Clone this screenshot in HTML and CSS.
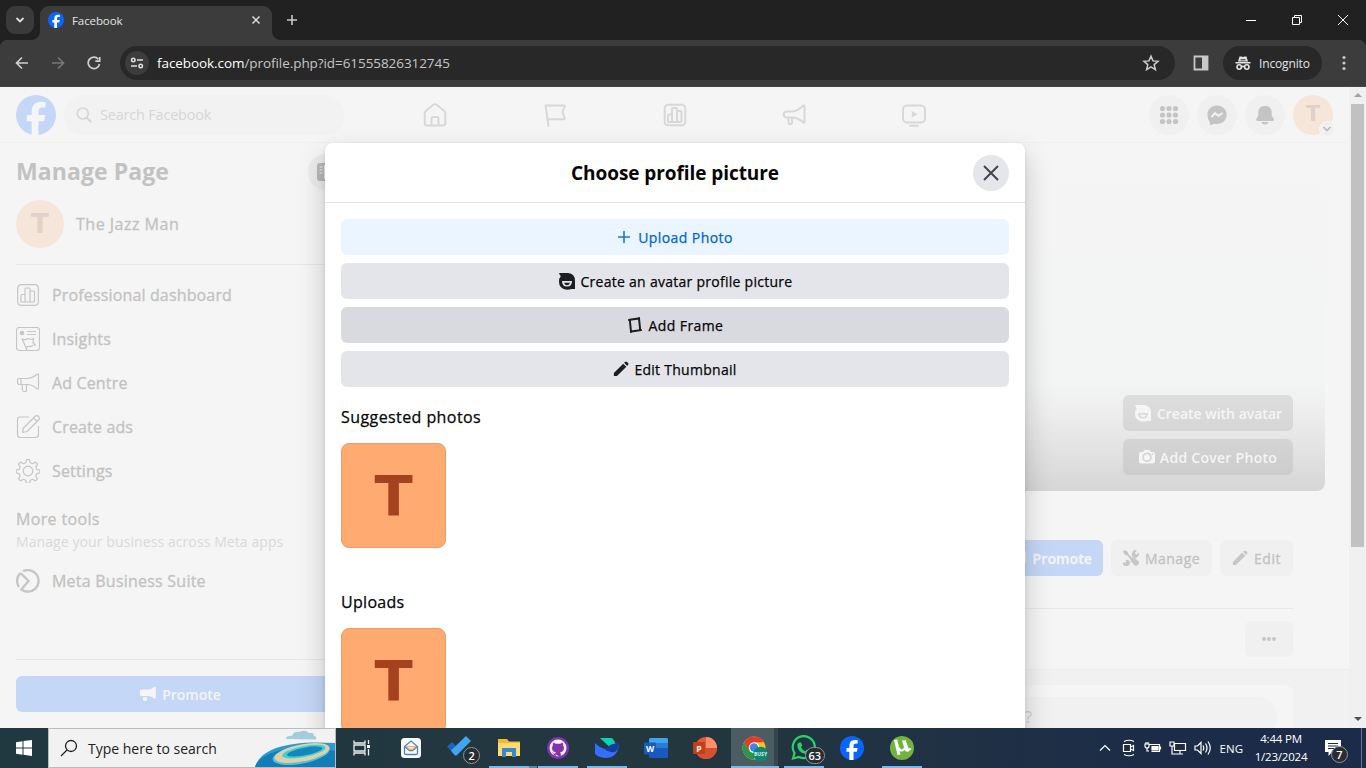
FILE: index.html
```html
<!DOCTYPE html>
<html lang="en">
<head>
<meta charset="utf-8">
<title>Facebook</title>
<link rel="stylesheet" href="styles.css">
</head>
<body>
<svg class="defs" width="0" height="0">
  <symbol id="fb" viewBox="0 0 40 40"><circle cx="20" cy="20" r="20" fill="currentColor"/><path class="fb-f" d="M15.600 40V26.200H10.800V20h4.800v-2.700C15.600 10 18.900 6.700 25.200 6.700c1.400 0 3.300.2 4.300.5v5.400c-.6-.1-1.500-.1-2.500-.1-3.500 0-4.500 1.300-4.500 4.700V20h6.800l-1.200 6.200h-5.600V40z"/></symbol>
  <symbol id="chart" viewBox="0 0 24 24"><rect x="1.700" y="1.700" width="20.600" height="20.600" rx="3.500"/><path d="M5 19v-6.500q0-1 1-1h3V19zM9 19V6q0-1 1-1h3q1 0 1 1v13M14 8h3.500q1 0 1 1v9q0 1-1 1H6"/></symbol>
  <symbol id="horn" viewBox="0 0 24 24"><path d="M5 8.500h5.500C15 8.500 19 5 21 2.700q1.500-.8 1.500 1v15q0 1.500-1.500.6C18.500 17 15 14.500 10.500 14.500H5q-3.300 0-3.300-3t3.300-3zM6.500 14.500v4.700q0 2 1.700 2t1.800-2v-4.700"/></symbol>
  <symbol id="hornfill" viewBox="0 0 18 16"><path d="M1 5q0-1.500 1.500-1.500H9Q12 3.500 15 1q1.800-.9 1.800.8v10q0 1.500-1.800.6Q12 10 9 10H2.500Q1 10 1 8.500zM4 11.200h4V14q0 1-1 1H5.500Q4 15 4 13.500z"/></symbol>
  <symbol id="pencil" viewBox="0 0 18 18"><path d="M1 17v-3.500L11.500 3 15 6.500 4.500 17zM12.500 2 14 .8q.8-.7 1.700.2l1.300 1.300q.8.900.2 1.700L16 5.500z"/></symbol>
  <symbol id="avatar" viewBox="0 0 18 18"><path fill-rule="evenodd" d="M1 1h9q7 .5 7 8v8h-3.500q-2 .7-4.500.7-8-.7-8-8Q1 6 2.800 4.200 1.500 3 1 1zM4 9q0 5.500 5 5.500T14 9z"/><path d="M6 10.800h6q-1 2.500-3 2.500t-3-2.500z"/></symbol>
</svg>

<div class="tabs">
  <div class="tab-search"><svg width="12" height="12" viewBox="0 0 12 12"><path d="M2.500 4 6 7.500 9.500 4" fill="none" stroke="#ddd" stroke-width="1.800"/></svg></div>
  <div class="tab">
    <svg class="favicon" width="16" height="16"><use href="#fb"/></svg><span>Facebook</span>
    <svg width="10" height="10" viewBox="0 0 10 10"><path d="M1.500 1.500l7 7M8.500 1.500l-7 7" stroke="#ddd" stroke-width="1.500"/></svg>
  </div>
  <svg class="newtab" width="12" height="12" viewBox="0 0 12 12"><path d="M6 1v10M1 6h10" stroke="#c8c8c8" stroke-width="1.600"/></svg>
  <div class="window-btns">
    <svg width="12" height="12" viewBox="0 0 12 12"><path d="M1 6.500h10"/></svg>
    <svg width="12" height="12" viewBox="0 0 12 12"><path d="M1.500 3.500h7v7h-7zM3.500 3.500v-2h7v7h-2"/></svg>
    <svg width="12" height="12" viewBox="0 0 12 12"><path d="M1 1l10 10M11 1L1 11"/></svg>
  </div>
</div>

<div class="toolbar">
  <div class="nav-btns">
    <svg width="14" height="14" viewBox="0 0 14 14"><path d="M13 7H2M7 1.500 1.500 7 7 12.500"/></svg>
    <svg class="dim" width="14" height="14" viewBox="0 0 14 14"><path d="M1 7h11M7 1.500 12.500 7 7 12.500"/></svg>
    <svg width="14" height="14" viewBox="0 0 14 14"><path d="M12.500 8A5.700 5.700 0 1 1 11.300 3.200M12.700 1v4.200H8.300"/></svg>
  </div>
  <div class="omnibox">
    <div class="site-info"><svg width="14" height="14" viewBox="0 0 14 14" fill="none" stroke="#ddd" stroke-width="1.600"><circle cx="3.300" cy="4" r="1.700"/><path d="M7 4h6M1 10h6"/><circle cx="10.700" cy="10" r="1.700"/></svg></div>
    <span class="url"><b>facebook.com</b>/profile.php?id=61555826312745</span>
    <svg width="18" height="18" viewBox="0 0 18 18"><path d="M9 2.200l2 4.700 5 .4-3.800 3.300 1.200 5L9 12.900l-4.400 2.700 1.200-5L2 7.300l5-.4z" fill="none" stroke="#ccc" stroke-width="1.500"/></svg>
  </div>
  <svg class="panel" width="16" height="16" viewBox="0 0 16 16"><path d="M1.500 1.500h13v13h-13z" fill="none" stroke="#c8c8c8" stroke-width="1.800"/><path d="M9 1h6v14H9z" fill="#c8c8c8"/></svg>
  <div class="incognito">
    <svg width="16" height="16" viewBox="0 0 16 16"><path d="M4.500 1.500h2l1.500.6 1.500-.6h2L13 6.500H3zM.5 7h15v1.600H.5z" fill="#e3e3e3"/><path d="M5.500 4.800h5" stroke="#282828"/><g fill="none" stroke="#e3e3e3" stroke-width="1.600"><circle cx="4.200" cy="12" r="2.200"/><circle cx="11.800" cy="12" r="2.200"/><path d="M6.400 11.800q1.600-.8 3.200 0"/></g></svg>
    <span>Incognito</span>
  </div>
  <svg class="menu" width="4" height="16" viewBox="0 0 4 16" fill="#c8c8c8"><circle cx="2" cy="2.500" r="1.600"/><circle cx="2" cy="8" r="1.600"/><circle cx="2" cy="13.500" r="1.600"/></svg>
</div>

<div class="page">
  <div class="content">
    <header class="fb-header">
      <svg class="logo" width="40" height="40"><use href="#fb"/></svg>
      <div class="search"><svg width="16" height="16" viewBox="0 0 16 16" fill="none" stroke="#d6d6d6" stroke-width="1.700"><circle cx="6.800" cy="6.500" r="5.500"/><path d="M10.700 10.500l4.500 4.700" stroke-width="2"/></svg><span>Search Facebook</span></div>
      <nav>
        <svg viewBox="0 0 24 24"><path d="M1.700 10.500q0-1.700 1.300-2.800l7-5.700q2-1.400 4 0l7 5.700q1.300 1.100 1.300 2.800V20q0 2.500-2.500 2.500H4.200Q1.700 22.500 1.700 20zM8.500 22.500v-7q0-1.500 1.500-1.500h4q1.500 0 1.500 1.500v7"/></svg>
        <svg viewBox="0 0 24 24"><path d="M5.500 23 2.500 2.500h18.700q.8.200.5 1L19.500 9l2.200 6q.2 1-.7 1.300H4.500"/></svg>
        <svg><use href="#chart"/></svg>
        <svg><use href="#horn"/></svg>
        <svg viewBox="0 0 24 24"><rect x="1" y="2.500" width="22" height="17" rx="4"/><path d="M8 22.800h8"/><path d="M9.800 8v6.500l5.700-3.250z" fill="#d8d8d8" stroke="none"/></svg>
      </nav>
      <div class="actions">
        <i><svg width="20" height="20" viewBox="0 0 20 20"><g id="r"><circle cx="3.500" cy="3.500" r="2.600"/><circle cx="10" cy="3.500" r="2.600"/><circle cx="16.500" cy="3.500" r="2.600"/></g><use href="#r" y="6.500"/><use href="#r" y="13"/></svg></i>
        <i><svg width="20" height="20" viewBox="0 0 20 20"><path d="M10 .5c5.500 0 9.600 4 9.600 9.300s-4.100 9.300-9.600 9.300q-1.500 0-2.800-.4L4 19.900q-1 .3-1.100-.8l-.2-2.300Q.4 14 .4 9.800C.4 4.500 4.500.5 10 .5z"/><path d="M4.500 12 8 8.200l3.500 2.700L15.500 8" fill="none" stroke="#f0f0f0" stroke-width="2"/></svg></i>
        <i><svg width="20" height="20" viewBox="0 0 20 20"><path d="M10 .8c4 0 6.700 2.800 6.700 6.500v3.500l2 3q.8 2-1.200 2.200h-15Q.5 15.800 1.300 13.800l2-3V7.300C3.300 3.600 6 .8 10 .8zM6.500 17h7Q13 19.500 10 19.500T6.500 17z"/></svg></i>
        <i class="me">T<em><svg width="10" height="8" viewBox="0 0 10 8"><path d="M1.500 2 5 5.500 8.500 2" fill="none" stroke="#bbb" stroke-width="1.700"/></svg></em></i>
      </div>
    </header>
    <div class="columns">
      <aside>
        <div class="side-title"><h1>Manage Page</h1><i><svg width="18" height="18" viewBox="0 0 18 18"><rect width="18" height="18" rx="3" fill="#b8b8b8"/><path d="M2.500 4h3M2.500 7h3M2.500 10h3M7.500 2v14" stroke="#eee" stroke-width="1.200"/></svg></i></div>
        <div class="profile"><i>T</i><span>The Jazz Man</span></div>
        <ul>
          <li><svg><use href="#chart"/></svg><span>Professional dashboard</span></li>
          <li><svg viewBox="0 0 24 24"><rect x=".5" y=".5" width="23" height="23" rx="3"/><circle cx="6" cy="6" r="1.700" fill="#c6c6c6"/><path d="M11 4.500h9M11 7.500h9M6 11.500l5 11.500M6.500 12q3 1.500 5.500-.5 3 1.500 5.500 0l-.5 4 2.500 2.500q-3 0-4.500 1.500-2.500-.5-5 1"/></svg><span>Insights</span></li>
          <li><svg viewBox="0 0 24 24"><path d="M3.500 7.500H11c4 0 7-1.500 10-4.200q1.500-.8 1.500.8v13q0 1.500-1.500.7-5-4.300-10-4.300H3.500q-2 0-2-2v-2q0-2 2-2zM5 7.500v6M6 13.500l.5 5.500q.2 1.500 1.500 1.500h1.500q1 0 1-1v-6"/></svg><span>Ad Centre</span></li>
          <li><svg viewBox="0 0 24 24"><path d="M13 2H4Q1.500 2 1.500 4.500v15Q1.500 22.500 4 22.500h15.500q3 0 3-3V11M6.500 17.500l1-4.500L19.500 1q1.500-1 3 .5T23 4.500l-12 12zM17.500 3l3.500 3.500"/></svg><span>Create ads</span></li>
          <li><svg viewBox="0 0 24 24"><circle cx="12" cy="12" r="4.800"/><path d="M10.500.7h3l.7 3 2.500 1 2.700-1.700 2.100 2.100-1.700 2.700 1 2.500 3 .7v3l-3 .7-1 2.500 1.700 2.700-2.100 2.100-2.700-1.700-2.500 1-.7 3h-3l-.7-3-2.500-1L4.600 22l-2.100-2.100 1.700-2.700-1-2.500-3-.7v-3l3-.7 1-2.500-1.700-2.700L4.600 3l2.700 1.700 2.500-1z"/></svg><span>Settings</span></li>
        </ul>
        <h2>More tools</h2>
        <p>Manage your business across Meta apps</p>
        <div class="suite"><svg width="24" height="24" viewBox="0 0 24 24" fill="none" stroke="#c6c6c6" stroke-width="2.400"><path d="M7 2.200A10.800 10.800 0 1 1 5.300 20.500L12.500 12 4.500 4M3 18A10.800 10.800 0 0 1 4.500 4"/></svg><span>Meta Business Suite</span></div>
        <div class="side-foot"><button><svg width="18" height="16"><use href="#hornfill"/></svg><span>Promote</span></button></div>
      </aside>
      <main>
        <section class="cover">
          <button class="c1"><svg width="18" height="18"><use href="#avatar"/></svg><span>Create with avatar</span></button>
          <button class="c2"><svg width="16" height="16" viewBox="0 0 16 16"><path fill-rule="evenodd" d="M2 3h2l1.500-2h5L12 3h2q2 0 2 2v7.500q0 2-2 2H2q-2 0-2-2V5q0-2 2-2zm6 .5a4.700 4.700 0 1 0 .01 0zM8 5a3.300 3.300 0 1 1-.01 0zm5.500-.7a.8.800 0 1 0 .01 0z"/></svg><span>Add Cover Photo</span></button>
        </section>
        <section class="page-actions">
          <button class="blue"><svg width="18" height="16"><use href="#hornfill"/></svg><span>Promote</span></button>
          <button class="manage"><svg width="16" height="16" viewBox="0 0 16 16"><path d="M0 1.500 1.500 0l3.500 2 .3 2L9 7.700l.5-.5q2 .3 3 1.300l3.300 3.300q.7 1.500-.8 3t-3 .8L8.700 12.300Q7.500 11 7.500 9.200L4 5.300l-2-.3zM1 15.500q-1.500-1-.8-3l2 .3 1-1-.5-2q3-.7 4 1.500t-1.200 4.200-4.500 0zM9 6q-.8-2.500.8-4.500T14 .3l-2 2.200.5 1.500 1.500.5 2-2.200q.5 2.500-1 4.200T11 7.500z"/></svg><span>Manage</span></button>
          <button><svg width="16" height="16"><use href="#pencil"/></svg><span>Edit</span></button>
        </section>
        <section class="more-row"><button><svg width="14" height="4" viewBox="0 0 14 4" fill="#c4c4c4"><circle cx="2" cy="2" r="1.900"/><circle cx="7" cy="2" r="1.900"/><circle cx="12" cy="2" r="1.900"/></svg></button></section>
        <section class="feed"><div class="card"><div class="composer">?</div></div></section>
      </main>
    </div>
  </div>
  <div class="scrollbar"><i class="up"></i><div></div><i class="down"></i></div>

  <div class="dialog">
    <div class="dlg-head"><h2>Choose profile picture</h2><button><svg width="18" height="18" viewBox="0 0 18 18"><path d="M2 2l14 14M16 2 2 16" stroke="#42464c" stroke-width="2"/></svg></button></div>
    <div class="dlg-body">
      <button class="upload"><svg width="14" height="14" viewBox="0 0 14 14"><path d="M7 1v12M1 7h12" stroke="#1a74dc" stroke-width="1.600"/></svg><span>Upload Photo</span></button>
      <button class="b-avatar"><svg width="18" height="18"><use href="#avatar"/></svg><span>Create an avatar profile picture</span></button>
      <button class="b-frame"><svg width="16" height="16" viewBox="0 0 16 16"><path d="M2.800 2.800 12 1.500l1.200 11.700L4 14.500z" fill="none" stroke="#1c1e21" stroke-width="2"/><path d="M1 3h3M12 .3v3M3.800 16v-3M15 13h-3" stroke="#1c1e21" stroke-width="1.300"/></svg><span>Add Frame</span></button>
      <button class="b-edit"><svg width="16" height="16"><use href="#pencil"/></svg><span>Edit Thumbnail</span></button>
      <h3>Suggested photos</h3>
      <div class="photo">T</div>
      <h3 class="uploads">Uploads</h3>
      <div class="photo">T</div>
    </div>
  </div>
</div>

<div class="taskbar">
  <div class="start"><svg width="16" height="16" viewBox="0 0 16 16"><path d="M0 2.200 6.500 1.200v6.300H0zM7.500 1.100 16 0v7.500H7.500zM0 8.500h6.500v6.300L0 13.800zM7.500 8.500H16V16l-8.500-1.200z" fill="#fff"/></svg></div>
  <div class="tb-search">
    <svg width="18" height="18" viewBox="0 0 18 18" fill="none" stroke="#222" stroke-width="1.300"><circle cx="11" cy="7" r="5.500"/><path d="M7 11l-6 6"/></svg><span>Type here to search</span>
    <svg class="island" width="80" height="38" viewBox="0 0 80 38"><path d="M0 38C5 20 32 11 80 14v24z" fill="#2a9ad0"/><path d="M0 38C5 23 40 13 80 22v16z" fill="#127db8"/><g transform="rotate(-11 47 24)"><ellipse cx="46" cy="25" rx="29" ry="9.500" fill="#4fc3d6"/><ellipse cx="47" cy="24" rx="28" ry="8.500" fill="#e3cfa6"/><ellipse cx="49" cy="23" rx="22" ry="5.500" fill="#40d0db"/><ellipse cx="50" cy="23" rx="18" ry="3.800" fill="#1488bd"/></g><path d="M31 10q1-4 6-3 2-5 7-4 6-3 10 1 5-1 5 3 3 0 2 3.500z" fill="#a5ccdb"/></svg>
  </div>
  <div class="apps">
    <div><svg width="18" height="16" viewBox="0 0 18 16" fill="none" stroke="#eee" stroke-width="1.300"><path d="M1 .5V3h11V.5M1 5h11v6H1zM1 15.500V13h11v2.500M15.500 0v4M15.500 9v6.500"/><path d="M14 5h3v3h-3z" fill="#fff" stroke="none"/></svg></div>
    <div><svg width="20" height="20" viewBox="0 0 20 20"><rect width="20" height="20" rx="3.500" fill="#f8f9fb"/><path d="M3.500 8.500 10 3l6.500 5.500V15q0 1.500-1.500 1.500H5Q3.500 16.500 3.500 15zl5 4h3l5-4" fill="none" stroke="#4f83bd" stroke-width="1.300"/><path d="M5.500 8.500h9l-2.500 2.500H8z" fill="none" stroke="#edb15f" stroke-width="1.200"/></svg></div>
    <div class="todo"><svg width="28" height="26" viewBox="0 0 28 26"><path d="M0 11.500 5 7l7 7-4.500 6z" fill="#1c63bb"/><path d="M7.500 20 4 15.500 19 1l5 5L10 20q-1.200 1-2.500 0z" fill="#42a5ef"/></svg><em class="badge b2">2</em></div>
    <div class="run files"><svg width="22" height="20" viewBox="0 0 22 20"><path d="M0 1h9l2 2.500h11V18H0z" fill="#f3b934"/><path d="M0 5h22v13H0z" fill="#ffdc73"/><path d="M4 19v-9h14v9h-4v-5H8v5z" fill="#3489d0"/></svg></div>
    <div class="run"><svg width="22" height="22" viewBox="0 0 22 22"><circle cx="11" cy="11" r="11" fill="#8333a9"/><circle cx="11" cy="11" r="8.500" fill="#f5f2f8"/><path d="M8.500 20v-3q-2.500.3-3.300-1.800M8.500 17q0-1.200.7-1.800-4-.5-4-4.200 0-1.500.9-2.500-.3-1.300.2-2.500 1.300 0 2.500 1h4.400q1.200-1 2.500-1 .5 1.200.2 2.500.9 1 .9 2.500 0 3.700-4 4.200.7.600.7 1.800v3z" fill="#8333a9" stroke="#8333a9" stroke-width=".5"/></svg></div>
    <div class="run"><svg width="24" height="20" viewBox="0 0 24 20"><path d="M5 0h12q3 3 3.500 6L14 8.500z" fill="#09d3b3"/><path d="M0 5q6 6 12 6 4-6 12-5-1 13-12 14Q4 20 0 16z" fill="#3370ff"/><path d="M10 12q6-8 14-6-1 10-8 8-3-1-6-2z" fill="#143c9d"/></svg></div>
    <div><svg width="24" height="20" viewBox="0 0 24 20"><rect x="5" width="19" height="20" rx="1.500" fill="#185abd"/><path d="M5 1.500Q5 0 6.500 0h16Q24 0 24 1.500V5H5z" fill="#41a5ee"/><path d="M5 5h19v5H5z" fill="#2b7cd3"/><rect y="4.500" width="12" height="12" rx="1" fill="#185abd"/><text x="6" y="14" class="office">W</text></svg></div>
    <div><svg width="24" height="22" viewBox="0 0 24 22"><circle cx="13" cy="11" r="11" fill="#e05a37"/><path d="M13 0a11 11 0 0 1 11 11H13z" fill="#ff8f6b"/><path d="M2 11h22a11 11 0 0 1-22 0z" fill="#d35230"/><rect y="5" width="12" height="12" rx="1" fill="#c43e1c"/><text x="6" y="14.500" class="office">P</text></svg></div>
    <div class="run active"><svg width="26" height="26" viewBox="0 0 26 26"><circle cx="12" cy="13" r="11.500" fill="#fbc116"/><path d="M2 7.300A11.500 11.500 0 0 1 22 7.300H12L7 16z" fill="#e33b2e"/><path d="M2 7.300 7.200 16 12 19v5.500A11.500 11.500 0 0 1 2 7.300z" fill="#229953"/><circle cx="12" cy="12.500" r="5.200" fill="#fff"/><circle cx="12" cy="12.500" r="4.200" fill="#4284ed"/><circle cx="18.500" cy="19" r="7.300" fill="#118773"/><text x="18.500" y="21" class="busy">BUSY</text></svg></div>
    <div class="run"><svg width="26" height="26" viewBox="0 0 26 26"><path d="M3 23.500 4.500 18A11 11 0 1 1 9 22z" fill="none" stroke="#25d366" stroke-width="2.200"/><path d="M9 7.500h2l1.200 3-1.200 1.700q1.500 3 4.300 4l1.500-1.800 3 1.500q0 3-3.500 3.300-9-1.500-9-9.500 0-1 1.700-2.200z" fill="#25d366"/></svg><em class="badge b63">63</em></div>
    <div class="tb-fb"><svg width="24" height="24"><use href="#fb"/></svg></div>
    <div class="run"><svg width="24" height="24" viewBox="0 0 24 24"><circle cx="12" cy="12" r="12" fill="#72b340"/><path d="M4 4l3.500 15 3-.5-1-3.500q3 1.500 5-1 1.500 2.500 4 1.500l3-2.500-1.500-1-1.500.5L15.500 4l-3.500.5 2 6.500q-.5 3-3 2.300L9 11 7.200 3.500z" fill="#fff"/></svg></div>
  </div>
  <div class="tray">
    <svg width="12" height="8" viewBox="0 0 12 8"><path d="M1 6.500 6 1.500l5 5"/></svg>
    <svg width="14" height="18" viewBox="0 0 14 18"><path d="M2 2.500q5-2.500 10 0M2 15.500q5 2.500 10 0M1.500 5.500h7v7h-7zM8.500 8l3-1.500v5L8.500 10"/></svg>
    <svg width="18" height="14" viewBox="0 0 18 14"><path d="M5.500 3.500h10v7h-8M15.500 6h1v2h-1M1 3h4v2q0 2-2 2T1 5zM2 1v2M4 1v2M3 7v3h2"/><path d="M8 5.500h6v3.500H8z" fill="#fff"/></svg>
    <svg width="18" height="14" viewBox="0 0 18 14"><path d="M5.500 2.500h11v7h-11zM1 1h4v4H1zM3 5v8h11M11 10v3"/></svg>
    <svg width="18" height="16" viewBox="0 0 18 16"><path d="M1 6h2.500L7 2.500v11L3.500 10H1zM9 5.500q1.500 2.500 0 5M11.500 3.500q3 4.500 0 9M14 1.500q4.500 6.500 0 13"/></svg>
    <span class="lang">ENG</span>
    <div class="clock"><span>4:44 PM</span><span class="date">1/23/2024</span></div>
    <div class="notes"><svg width="18" height="17" viewBox="0 0 18 17"><path d="M0 0h16v12H7l-3.500 4v-4H0z" fill="#fff" stroke="none"/><path d="M3 3.500h10M3 6h10M3 8.500h7" stroke="#1c2c48"/></svg><em class="badge b7">7</em></div>
    <div class="desktop-edge"></div>
  </div>
</div>
</body>
</html>
```
FILE: styles.css
```css
* { box-sizing: border-box; }
body { margin: 0; width: 1366px; height: 768px; overflow: hidden; display: flex; flex-direction: column; font-family: "Open Sans", "Noto Sans", sans-serif; font-size: 14px; color: #050505; }
h1, h2, h3, p, ul { margin: 0; padding: 0; list-style: none; }
button { font: inherit; border: 0; padding: 0; display: flex; align-items: center; justify-content: center; }
i, em { font-style: normal; }
svg { flex: none; display: block; }
span { white-space: nowrap; }
.defs { position: absolute; }
.fb-f { fill: var(--f, #fff); }

/* browser chrome */
.tabs { height: 40px; background: #202120; display: flex; align-items: center; padding-left: 6px; flex: none; }
.tab-search { width: 28px; height: 28px; border-radius: 9px; background: #3a3a3a; display: grid; place-items: center; margin-right: 6px; }
.tab { position: relative; width: 232px; height: 34px; align-self: flex-end; background: #3c3c3c; border-radius: 9px 9px 0 0; display: flex; align-items: center; padding: 0 11px 6px 8px; color: #e3e3e3; font-size: 11.500px; letter-spacing: -.1px; }
.tab::before, .tab::after { content: ""; position: absolute; bottom: 0; width: 8px; height: 8px; }
.tab::before { left: -8px; background: radial-gradient(circle at 0 0, transparent 7.500px, #3c3c3c 8px); }
.tab::after { right: -8px; background: radial-gradient(circle at 100% 0, transparent 7.500px, #3c3c3c 8px); }
.tab span { flex: 1; margin-left: 8px; padding-top: 1px; }
.favicon { color: #0866ff; }
.newtab { margin-left: 14px; }
.window-btns { margin-left: auto; display: flex; gap: 34px; padding-right: 17px; fill: none; stroke: #fff; stroke-width: 1; }
.toolbar { height: 47px; flex: none; background: radial-gradient(circle at 8px 8px, #3c3c3c 8px, #202120 8.500px) 0 0 / 8px 8px no-repeat, radial-gradient(circle at 0 8px, #3c3c3c 8px, #202120 8.500px) 100% 0 / 8px 8px no-repeat, #3c3c3c; display: flex; align-items: center; border-bottom: 1px solid #454545; }
.nav-btns { display: flex; gap: 22px; width: 120px; padding-left: 15px; fill: none; stroke: #d0d0d0; stroke-width: 1.700; }
.dim { stroke: #777; }
.omnibox { width: 1055px; height: 34px; background: #282828; border-radius: 17px; display: flex; align-items: center; padding: 0 15px 0 5px; }
.site-info { width: 24px; height: 24px; border-radius: 50%; background: #3c3c3c; display: grid; place-items: center; }
.url { flex: 1; margin-left: 8px; font-size: 13.500px; color: #c5c5c5; letter-spacing: -.07px; }
.url b { font-weight: 400; color: #fff; }
.panel { margin-left: 18px; }
.incognito { width: 99px; height: 34px; margin-left: 14px; border-radius: 17px; background: #282828; display: flex; align-items: center; padding-left: 12px; gap: 8px; color: #e3e3e3; font-size: 12px; letter-spacing: -.15px; }
.menu { margin-left: 20px; }

/* dimmed page */
.page { position: relative; height: 641px; flex: none; display: flex; overflow: hidden; background: #f5f5f5; }
.content { width: 1349px; color: #c2c2c2; --f: #f5f5f5; }
.fb-header { height: 56px; border-bottom: 1px solid #f0f0f0; display: flex; align-items: center; padding: 0 16px; }
.logo { color: #c4d7f7; }
.search { width: 280px; height: 40px; border-radius: 20px; margin-left: 8px; background: #f2f2f2; display: flex; align-items: center; gap: 8px; padding-left: 12px; color: #d6d6d6; font-size: 14.500px; letter-spacing: -.2px; }
.fb-header nav { display: flex; gap: 95.800px; margin-left: 79px; }
.fb-header nav svg { width: 24px; height: 24px; fill: none; stroke: #d8d8d8; stroke-width: 2; stroke-linejoin: round; stroke-linecap: round; }
.actions { margin-left: auto; display: flex; gap: 8px; fill: #c4c4c4; }
.actions i { position: relative; width: 40px; height: 40px; border-radius: 50%; background: #f0f0f0; display: grid; place-items: center; }
.actions .me, .profile i { background: #f6e5d9; color: #e2d0cb; font: 700 21px/1 "DejaVu Sans", sans-serif; }
.actions em { position: absolute; right: -1px; bottom: -1px; width: 14px; height: 14px; background: #f0f0f0; outline: 1px solid #f7f7f7; border-radius: 50%; display: grid; place-items: center; }
.columns { display: flex; height: 585px; overflow: hidden; }
aside { width: 360px; padding: 11px 16px 16px; display: flex; flex-direction: column; }
.side-title { height: 36px; display: flex; align-items: center; justify-content: space-between; }
h1 { font-size: 23px; line-height: 34px; height: 36px; letter-spacing: .08px; }
.side-title i { width: 36px; height: 36px; border-radius: 50%; background: #ececec; display: grid; place-items: center; }
.profile { display: flex; align-items: center; gap: 12px; height: 75px; padding: 10px 0 17px; border-bottom: 1px solid #e8e8e8; font-size: 16px; letter-spacing: .5px; }
.profile i { width: 48px; height: 48px; border-radius: 50%; display: grid; place-items: center; font-size: 26px; }
.profile span, li span, .suite span, aside h2, .page-actions span { -webkit-text-stroke: .3px currentColor; }
ul { padding-top: 8px; }
li, .suite { height: 44px; display: flex; align-items: center; gap: 12px; font-size: 16px; letter-spacing: .15px; }
.suite { letter-spacing: .23px; }
li svg { width: 24px; height: 24px; fill: none; stroke: #c6c6c6; stroke-width: 1.200; stroke-linejoin: round; }
aside h2 { font-size: 16px; font-weight: 400; line-height: 22px; margin-top: 15px; letter-spacing: .35px; }
aside p { font-size: 14px; line-height: 20px; color: #d9d9d9; margin-top: 2px; letter-spacing: .09px; }
.suite { margin-top: 7px; }
.side-foot { margin-top: auto; padding-top: 16px; border-top: 1px solid #e8e8e8; width: 344px; }
.side-foot button, .blue { height: 36px; width: 328px; border-radius: 6px; background: #c4d7f7; color: #f5f5f5; fill: #f5f5f5; font-weight: 600; gap: 5px; }
main { flex: 1; min-width: 0; display: flex; flex-direction: column; }
.cover { height: 348px; flex: none; margin-right: 24px; background: linear-gradient(#f5f5f5, #f3f4f4 68%, #efefef 76%, #d6d6d6); border-radius: 0 0 8px 8px; display: flex; flex-direction: column; align-items: flex-end; justify-content: flex-end; gap: 8px; padding: 0 32px 16px; }
.cover button { width: 170px; height: 36px; border-radius: 6px; background: rgba(165,165,165,.27); color: #f5f5f5; fill: #f5f5f5; font-weight: 600; gap: 5px; }
.cover .c2 { letter-spacing: .28px; }
.page-actions { display: flex; flex: none; justify-content: flex-end; gap: 8px; height: 118px; margin: 0 56px 0 0; padding-top: 49px; border-bottom: 1px solid #e8e8e8; }
.page-actions button { height: 36px; border-radius: 6px; background: #f0f0f0; color: #c2c2c2; fill: #c6c6c6; width: 73px; gap: 6px; letter-spacing: .5px; }
.page-actions .manage { width: 101px; }
.page-actions .blue { width: 117px; justify-content: flex-end; padding-right: 11px; background: #c4d7f7; color: #f5f5f5; fill: #f5f5f5; font-weight: 600; letter-spacing: .1px; }
.more-row { height: 61px; flex: none; padding: 12px 56px 0; border-bottom: 1px solid #ececec; display: flex; justify-content: flex-end; }
.more-row button { width: 48px; height: 36px; border-radius: 6px; background: #f0f0f0; }
.feed { flex: 1; background: #f1f1f1; padding: 15px 56px 0 0; }
.card { height: 60px; border-radius: 8px; background: #f5f5f5; padding: 12px 16px; }
.composer { height: 40px; border-radius: 20px; background: #f1f1f1; padding: 9px 0 0 649px; color: #d0d0d0; font-size: 16px; }
.scrollbar { width: 17px; background: #f0f0f0; display: flex; flex-direction: column; align-items: center; }
.scrollbar div { width: 13px; height: 443px; background: #c1c1c1; margin-top: 7px; }
.up, .down { border: 4px solid transparent; border-top: 0; border-bottom: 4px solid #a3a3a3; height: 4px; }
.scrollbar .up { margin-top: 6px; }
.scrollbar .down { border-bottom: 0; border-top: 4px solid #505050; margin-top: auto; margin-bottom: 7px; }

/* dialog lies over the page */
.dialog { position: absolute; left: 325px; top: 56px; width: 700px; height: 640px; background: #fff; border-radius: 8px; box-shadow: 0 12px 28px rgba(0,0,0,.2), 0 2px 4px rgba(0,0,0,.1); }
.dlg-head { height: 60px; border-bottom: 1px solid #e1e2e5; display: grid; grid-template-columns: 52px 1fr 52px; align-items: center; }
.dlg-head h2 { grid-column: 2; text-align: center; font-size: 19px; font-weight: 700; letter-spacing: -.07px; }
.dlg-head button { width: 36px; height: 36px; border-radius: 50%; background: #e4e6eb; }
.dlg-body { padding: 16px; display: flex; flex-direction: column; gap: 8px; }
.dlg-body button { height: 36px; border-radius: 6px; background: #e4e5ea; color: #050505; fill: #1c1e21; gap: 5px; letter-spacing: .27px; }
.dlg-body button span { -webkit-text-stroke: .25px currentColor; }
.dlg-body .upload { background: #ebf5ff; color: #0064d1; gap: 7px; letter-spacing: .42px; }
.dlg-body .b-frame { background: #d9dadf; gap: 6px; letter-spacing: .4px; }
h3 { font-size: 16px; font-weight: 400; line-height: 20px; margin: 12px 0 8px; letter-spacing: .42px; -webkit-text-stroke: .25px currentColor; }
.dlg-body h3.uploads { margin-top: 36px; letter-spacing: .3px; }
.photo { width: 105px; height: 105px; border-radius: 8px; background: #ffaa70; border: 1px solid #e89d68; color: #a4411f; display: grid; place-items: center; font: 700 56px/1 "DejaVu Sans", sans-serif; }

/* taskbar */
.taskbar { height: 40px; flex: none; display: flex; background: linear-gradient(90deg, #203840, #23373f 50%, #1c2c48 85%); color: #fff; }
.start { width: 48px; display: grid; place-items: center; }
.tb-search { width: 288px; height: 40px; background: #f2f2f2; border: 1px solid #bbb; display: flex; align-items: center; padding-left: 11px; gap: 10px; color: #222; font-size: 14px; }
.island { margin-left: auto; }
.apps { display: flex; margin-left: 1px; }
.apps > div { width: 49.100px; height: 40px; position: relative; display: grid; place-items: center; }
.apps .todo { padding-left: 3px; }
.run::after { content: ""; position: absolute; left: 5px; bottom: 0; width: 40px; height: 2px; background: #76b9ed; }
.files::after { border-right: 8px solid #5588ab; }
.apps .active { padding-left: 2px; background: linear-gradient(90deg, transparent 1px, #4b5c63 1px, #4b5c63 44px, #37474e 44px, #37474e 48px, transparent 48px); }
.active::after { left: 1px; width: 48px; }
.office { font: 700 8.500px "Open Sans", sans-serif; fill: #fff; text-anchor: middle; }
.busy { font: 700 5px "Open Sans", sans-serif; fill: #d5eee9; text-anchor: middle; }
.tb-fb { color: #0866ff; }
.badge { position: absolute; width: 17px; height: 17px; border-radius: 9px; background: #292d30; border: 1px solid #8d9598; color: #fff; font-size: 11px; font-weight: 600; line-height: 15px; text-align: center; }
.b2 { left: 28px; top: 19px; }
.b63 { left: 26px; top: 19px; width: 20px; }
.tray { margin-left: auto; display: flex; align-items: center; fill: none; stroke: #fff; stroke-width: 1.200; gap: 7px; font-size: 11.500px; }
.tray > svg:first-child { margin-right: 4px; }
.tray > svg:nth-child(2) { margin-right: 1px; }
.lang { margin-left: 1px; }
.clock { width: 66px; display: flex; flex-direction: column; align-items: center; line-height: 18px; margin-left: -2px; letter-spacing: -.2px; }
.notes { position: relative; width: 18px; margin-left: 4px; }
.b7 { left: 6px; top: 6px; }
.desktop-edge { width: 1px; height: 40px; background: #69758a; margin: 0 4px 0 11px; }
```
